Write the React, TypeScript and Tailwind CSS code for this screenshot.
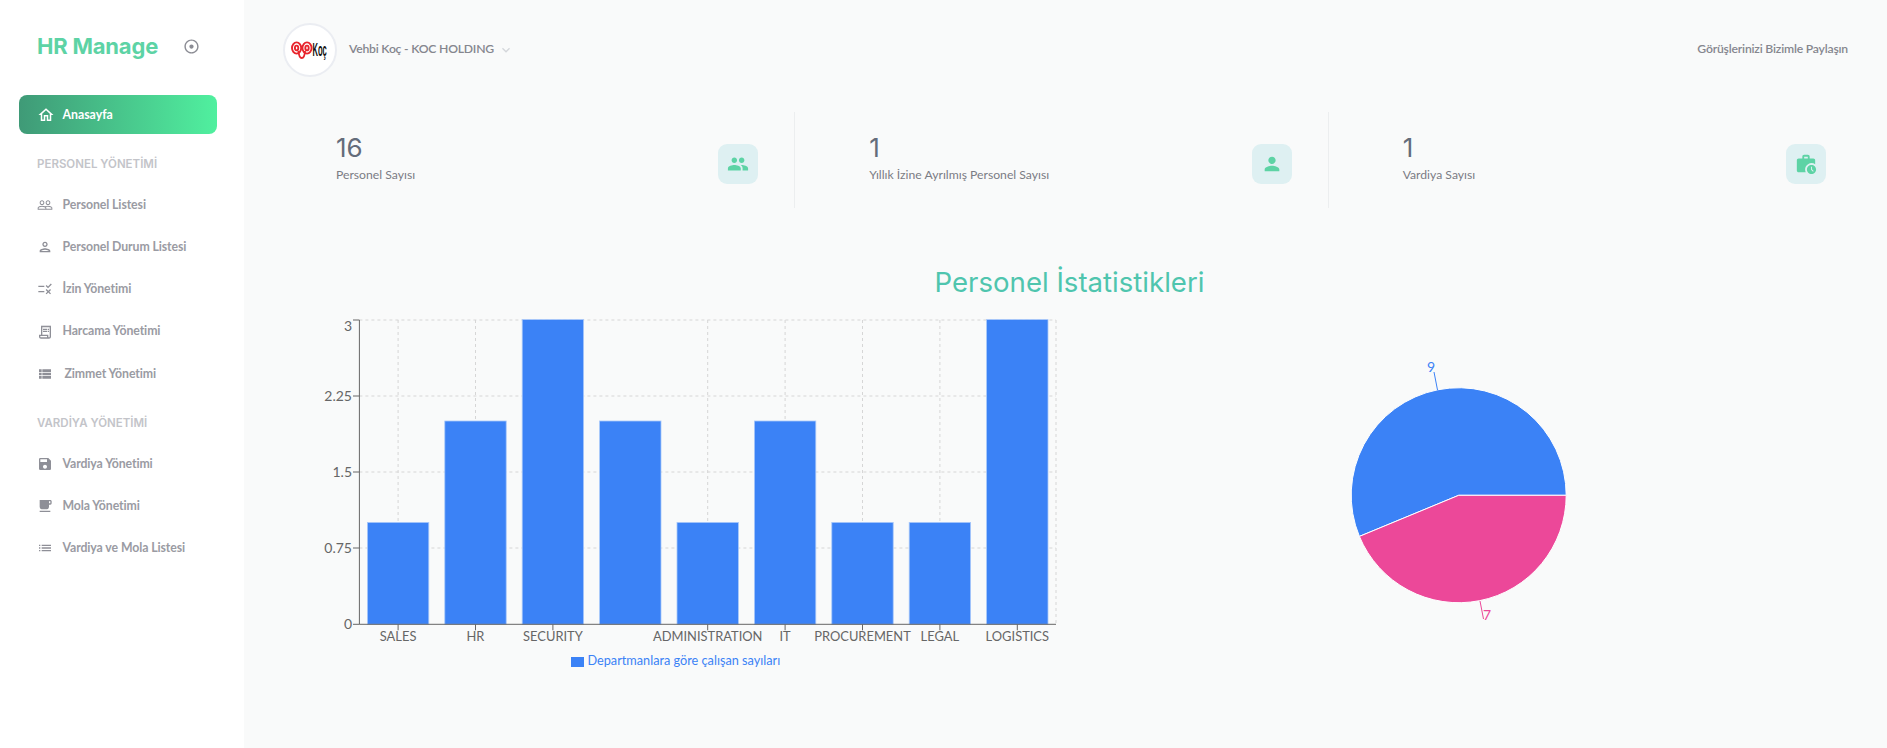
import React from 'react'
import {
  MdAdjust,
  MdKeyboardArrowDown,
  MdList,
  MdLocalCafe,
  MdOutlineHome,
  MdOutlinePerson,
  MdOutlineReceiptLong,
  MdOutlineRule,
  MdPeople,
  MdPeopleOutline,
  MdPerson,
  MdSave,
  MdViewList,
  MdWorkHistory,
} from 'react-icons/md'

const lato = "font-['Lato','Liberation_Sans',sans-serif]"
const head = "font-['Inter','Liberation_Sans',sans-serif]"

const MenuItem = ({ icon, label, indent }: { icon: React.ReactNode; label: string; indent?: boolean }) => (
  <div className="h-[42.2px] flex items-center pl-[37px] text-[#9a9ba3]">
    <span className="w-[25.5px] flex text-[16px] text-[#8e8f97]">{icon}</span>
    <span className={`text-[12.3px] font-bold tracking-[-0.1px] ${indent ? 'ml-[2px]' : ''}`}>{label}</span>
  </div>
)

const SectionTitle = ({ label }: { label: string }) => (
  <div className={`h-[42px] pt-[3px] flex items-center pl-[37px] text-[11.5px] font-semibold text-[#c3c4c9] ${head}`}>{label}</div>
)

const Sidebar = () => (
  <aside className={`w-[244px] shrink-0 bg-white flex flex-col ${lato}`}>
    <div className="h-[95px] pb-[2px] flex items-center pl-[37px]">
      <span className={`text-[22px] font-bold tracking-[-0.2px] text-[#5dd3a5] w-[146px] ${head}`}>HR Manage</span>
      <MdAdjust className="text-[#8b8c94] text-[17px]" />
    </div>
    <div className="ml-[19px] mr-[27px] h-[39px] rounded-lg bg-gradient-to-r from-[#3f9a77] to-[#50f09f] flex items-center pl-[18px] text-white">
      <span className="w-[25.5px] flex text-[18px]"><MdOutlineHome /></span>
      <span className="text-[12.3px] font-bold pt-[2px]">Anasayfa</span>
    </div>
    <div className="mt-[8px]">
      <SectionTitle label="PERSONEL YÖNETİMİ" />
      <MenuItem icon={<MdPeopleOutline />} label="Personel Listesi" />
      <MenuItem icon={<MdOutlinePerson />} label="Personel Durum Listesi" />
      <MenuItem icon={<MdOutlineRule />} label="İzin Yönetimi" />
      <MenuItem icon={<MdOutlineReceiptLong />} label="Harcama Yönetimi" />
      <MenuItem icon={<MdViewList />} label="Zimmet Yönetimi" indent />
    </div>
    <div className="mt-[6px]">
      <SectionTitle label="VARDİYA YÖNETİMİ" />
      <MenuItem icon={<MdSave />} label="Vardiya Yönetimi" />
      <MenuItem icon={<MdLocalCafe />} label="Mola Yönetimi" />
      <MenuItem icon={<MdList />} label="Vardiya ve Mola Listesi" />
    </div>
  </aside>
)

const KocLogo = () => (
  <svg width="38" height="22" viewBox="0 0 38 22">
    <g fill="none" stroke="#e8242c" strokeWidth="1.9">
      <ellipse cx="5.6" cy="9" rx="4.6" ry="5.6" />
      <ellipse cx="5.6" cy="9" rx="1.7" ry="2.4" />
      <ellipse cx="16" cy="9" rx="4.6" ry="5.6" />
      <ellipse cx="16" cy="9" rx="1.7" ry="2.4" />
      <path d="M7.5 12 Q8 19 10.8 19 Q13.6 19 14 12" />
    </g>
    <text transform="translate(21.5 16.5) scale(0.4 1)" fontSize="19" fontWeight="700" fill="#111" fontFamily="Liberation Sans, sans-serif">Koç</text>
  </svg>
)

const Header = () => (
  <header className="h-[100px] flex items-center justify-between pl-[21px] pr-[14px] pb-[1px]">
    <div className="flex items-center">
      <div className="w-[54px] h-[54px] rounded-full bg-white border-2 border-[#ebedf2] flex items-center justify-center">
        <KocLogo />
      </div>
      <span className="ml-[12px] text-[12.2px] font-semibold tracking-[-0.22px] text-[#85868e]">Vehbi Koç - KOC HOLDING</span>
      <MdKeyboardArrowDown className="ml-[4px] text-[16px] text-[#d4d6da]" />
    </div>
    <span className="text-[12.2px] font-semibold tracking-[-0.2px] text-[#85868e]">Görüşlerinizi Bizimle Paylaşın</span>
  </header>
)

const Stat = ({ value, label, icon, last }: { value: string; label: string; icon: React.ReactNode; last?: boolean }) => (
  <div className={`flex items-center justify-between pl-[74px] pr-[36px] ${last ? '' : 'border-r border-[#eceeef]'}`}>
    <div className="flex flex-col pb-[4px]">
      <span className={`text-[26px] leading-[32px] font-normal text-[#646c7a] ${head}`}>{value}</span>
      <span className="mt-[2px] text-[12.2px] leading-[18px] text-[#7b7c84]">{label}</span>
    </div>
    <div className="mt-[8px] w-[40px] h-[40px] rounded-[9px] bg-[#def0f2] flex items-center justify-center text-[22px] text-[#5dd3a5]">
      {icon}
    </div>
  </div>
)

const categories = ['SALES', 'HR', 'SECURITY', '', 'ADMINISTRATION', 'IT', 'PROCUREMENT', 'LEGAL', 'LOGISTICS']
const counts = [1, 2, 3, 2, 1, 2, 1, 1, 3]
const AXIS_X = 359.4
const AXIS_Y = 624.3
const STEP = 77.4
const UNIT = 101.4

const BarChart = () => (
  <svg width="760" height="375" viewBox="320 305 760 375" className="shrink-0" fontFamily="Lato, sans-serif" fontSize="12.9">
    <g stroke="#d6d6d6" strokeDasharray="3 3">
      {[320, 396, 472, 548].map((y) => (
        <line key={y} x1={AXIS_X} x2={1056} y1={y} y2={y} />
      ))}
      {categories.map((c, i) =>
        c ? <line key={i} x1={AXIS_X + STEP * (i + 0.5)} x2={AXIS_X + STEP * (i + 0.5)} y1={320} y2={AXIS_Y} /> : null
      )}
      <line x1={1056} x2={1056} y1={320} y2={AXIS_Y} />
    </g>
    {counts.map((v, i) => (
      <rect
        key={i}
        x={AXIS_X + STEP * i + 8}
        y={AXIS_Y - v * UNIT - 0.5}
        width={61.4}
        height={v * UNIT + 0.5}
        fill="#3b82f6"
        stroke="#a8c8fb"
        strokeWidth="0.8"
      />
    ))}
    <g stroke="#666">
      <line x1={AXIS_X} x2={AXIS_X} y1={320} y2={AXIS_Y} />
      <line x1={AXIS_X} x2={1056} y1={AXIS_Y} y2={AXIS_Y} />
      {[320, 396, 472, 548, AXIS_Y].map((y) => (
        <line key={y} x1={353} x2={AXIS_X} y1={y} y2={y} />
      ))}
      {categories.map((c, i) =>
        c ? <line key={i} x1={AXIS_X + STEP * (i + 0.5)} x2={AXIS_X + STEP * (i + 0.5)} y1={AXIS_Y} y2={AXIS_Y + 6} /> : null
      )}
    </g>
    <g fill="#666" textAnchor="end" fontSize="14">
      <text x={352} y={331}>3</text>
      <text x={352} y={401}>2.25</text>
      <text x={352} y={477}>1.5</text>
      <text x={352} y={553}>0.75</text>
      <text x={352} y={629}>0</text>
    </g>
    <g fill="#666" textAnchor="middle">
      {categories.map((c, i) => (
        <text key={i} x={AXIS_X + STEP * (i + 0.5)} y={641}>{c}</text>
      ))}
    </g>
    <rect x={571} y={657} width={13} height={10} fill="#3b82f6" />
    <text x={587.5} y={665} fontSize="12.7" fill="#3b82f6">Departmanlara göre çalışan sayıları</text>
  </svg>
)

const PieChart = () => (
  <svg width="280" height="300" viewBox="1320 340 280 300" className="shrink-0" fontFamily="Lato, sans-serif" fontSize="14">
    <path d="M1458.7 495.3 L1566.2 495.3 A107.5 107.5 0 1 0 1359.4 536.4 Z" fill="#3b82f6" stroke="#fff" strokeWidth="1" />
    <path d="M1458.7 495.3 L1359.4 536.4 A107.5 107.5 0 0 0 1566.2 495.3 Z" fill="#ec4899" stroke="#fff" strokeWidth="1" />
    <line x1={1437.5} y1={390} x2={1434} y2={372} stroke="#3b82f6" />
    <line x1={1480} y1={601} x2={1483.5} y2={619} stroke="#ec4899" />
    <text x={1431} y={372} fill="#3b82f6" textAnchor="middle">9</text>
    <text x={1487} y={620} fill="#ec4899" textAnchor="middle">7</text>
  </svg>
)

const App = () => {
  return (
    <div className={`w-full h-screen overflow-hidden flex bg-[#f9fafa] ${lato}`}>
      <Sidebar />
      <main className="flex-1 min-w-0 pl-[18px] pr-[25px]">
        <Header />
        <section className="mt-[12px] h-[96px] grid grid-cols-3">
          <Stat value="16" label="Personel Sayısı" icon={<MdPeople />} />
          <Stat value="1" label="Yıllık İzine Ayrılmış Personel Sayısı" icon={<MdPerson />} />
          <Stat value="1" label="Vardiya Sayısı" icon={<MdWorkHistory />} last />
        </section>
        <h2 className={`mt-[54px] h-[40px] pt-[2px] pl-[15px] flex items-center justify-center text-[27.6px] font-normal text-[#4fc5ae] ${head}`}>
          Personel İstatistikleri
        </h2>
        <div className="mt-[3px] pl-[58px] flex items-start">
          <BarChart />
          <div className="ml-[240px] mt-[35px]">
            <PieChart />
          </div>
        </div>
      </main>
    </div>
  )
}

export default App
